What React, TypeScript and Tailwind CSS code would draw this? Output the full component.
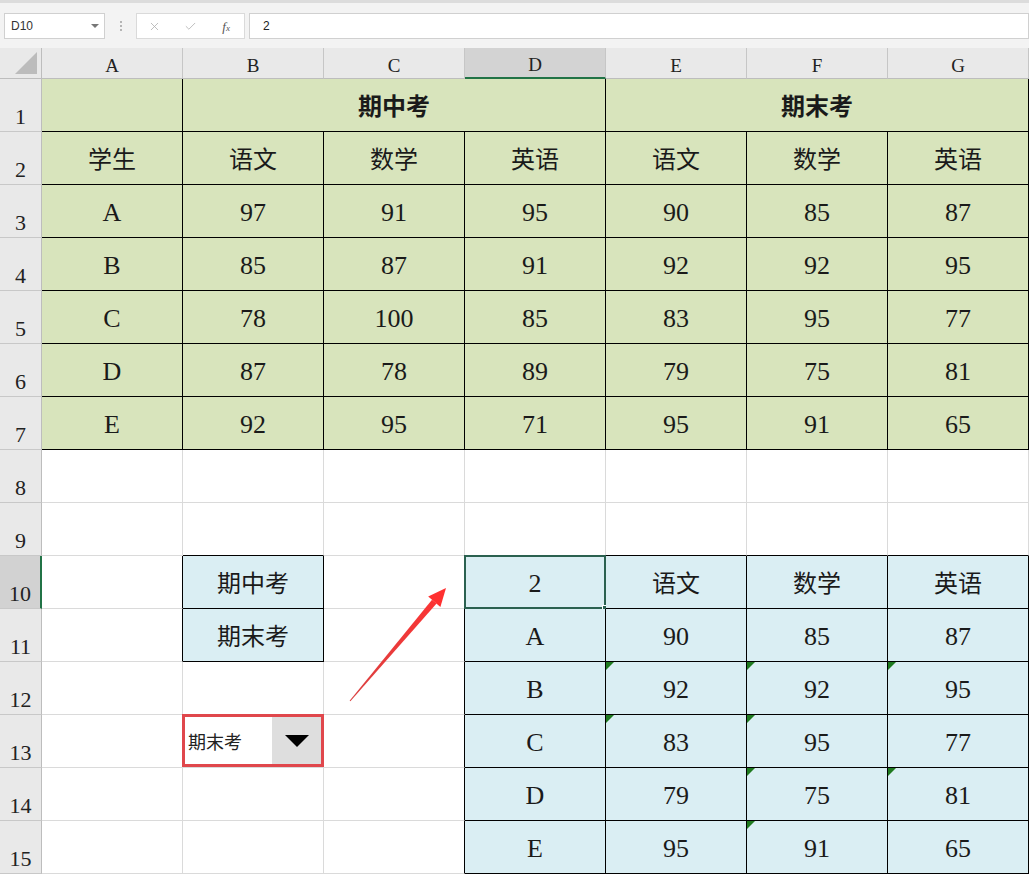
import React from 'react';
import { X, Check } from 'lucide-react';

type CellDef = { t?: string; bold?: boolean; mark?: boolean; dd?: boolean; sel?: boolean };

const SERIF = "font-['Liberation_Serif','Noto_Sans_CJK_SC',serif]";
const SANS = "font-['Noto_Sans_CJK_SC','Noto_Sans',sans-serif]";

const c = (t: string, extra: Partial<CellDef> = {}): CellDef => ({ t, ...extra });

const rows: CellDef[][] = [
  [],
  ['学生', '语文', '数学', '英语', '语文', '数学', '英语'].map((t) => c(t)),
  ['A', '97', '91', '95', '90', '85', '87'].map((t) => c(t)),
  ['B', '85', '87', '91', '92', '92', '95'].map((t) => c(t)),
  ['C', '78', '100', '85', '83', '95', '77'].map((t) => c(t)),
  ['D', '87', '78', '89', '79', '75', '81'].map((t) => c(t)),
  ['E', '92', '95', '71', '95', '91', '65'].map((t) => c(t)),
  Array.from({ length: 7 }, () => c('')),
  Array.from({ length: 7 }, () => c('')),
  [c(''), c('期中考'), c(''), c('2', { sel: true }), c('语文'), c('数学'), c('英语')],
  [c(''), c('期末考'), c(''), c('A'), c('90'), c('85'), c('87')],
  [c(''), c(''), c(''), c('B'), c('92', { mark: true }), c('92', { mark: true }), c('95', { mark: true })],
  [c(''), c('', { dd: true }), c(''), c('C'), c('83', { mark: true }), c('95', { mark: true }), c('77')],
  [c(''), c(''), c(''), c('D'), c('79'), c('75', { mark: true }), c('81', { mark: true })],
  [c(''), c(''), c(''), c('E'), c('95'), c('91', { mark: true }), c('65')],
];

function inTable(r: number, col: number) {
  if (r >= 1 && r <= 7) return true;
  if (r >= 10 && r <= 15 && col >= 3) return true;
  if ((r === 10 || r === 11) && col === 1) return true;
  return false;
}

function bgOf(r: number, col: number) {
  if (r >= 1 && r <= 7) return 'bg-[#d8e4bc]';
  if (inTable(r, col)) return 'bg-[#daeef3]';
  return 'bg-white';
}

function RowHeader({ n }: { n: number }) {
  const selected = n === 10;
  return (
    <div
      className={`h-[53px] flex items-end justify-center pb-[1px] border-b border-b-[#c8c8c8] ${SERIF} text-[22px] leading-none text-[#222] ${
        selected ? 'bg-[#d2d2d2] border-r-2 border-r-[#217346]' : 'bg-[#e9e9e9] border-r border-r-[#bdbdbd]'
      }`}
    >
      <span className="pb-[2px]">{n}</span>
    </div>
  );
}

function Cell({ r, col, d, span = 1 }: { r: number; col: number; d: CellDef; span?: number }) {
  const lastCol = col + span - 1;
  const rb = inTable(r, lastCol) || (lastCol < 6 && inTable(r, lastCol + 1)) ? 'border-r-black' : 'border-r-[#dadada]';
  const bb = inTable(r, col) || inTable(r + 1, col) ? 'border-b-black' : 'border-b-[#dadada]';
  const isCjk = d.t && /[\u4e00-\u9fff]/.test(d.t);
  return (
    <div
      className={`relative h-[53px] border-r border-b ${rb} ${bb} ${bgOf(r, col)} flex items-center justify-center pt-[3px] ${
        span === 3 ? 'col-span-3' : ''
      }`}
    >
      {d.t ? (
        <span
          className={`${SERIF} leading-none text-[#1a1a1a] ${isCjk ? 'text-[24px]' : 'text-[26px]'} ${
            d.bold ? 'font-bold' : 'font-normal'
          }`}
        >
          {d.t}
        </span>
      ) : null}
      {d.mark ? (
        <div className="absolute left-0 top-0 w-0 h-0 border-t-[8px] border-t-[#1f7a1f] border-r-[8px] border-r-transparent" />
      ) : null}
      {d.sel ? (
        <div className="absolute -left-px -top-px w-[142px] h-[54px] border-2 border-[#2b6150]">
          <div className="absolute -right-[4px] -bottom-[4px] w-[6px] h-[6px] bg-[#2b6150] border border-white" />
        </div>
      ) : null}
      {d.dd ? (
        <div className="absolute -left-px -top-px -right-px bottom-0 border-[3px] border-[#e0474c] bg-white flex">
          <div className={`flex-1 flex items-center pl-[3px] pt-[1px] ${SANS} text-[18px] text-[#222]`}>期末考</div>
          <div className="w-[49px] bg-[#dedede] flex items-center justify-center">
            <div className="w-0 h-0 border-l-[12px] border-l-transparent border-r-[12px] border-r-transparent border-t-[12px] border-t-black" />
          </div>
        </div>
      ) : null}
    </div>
  );
}

export default function App() {
  const cols = ['A', 'B', 'C', 'D', 'E', 'F', 'G'];
  return (
    <div className="relative w-[1029px] h-[875px] overflow-hidden bg-white">
      <div className="h-[48px] bg-[#f3f3f3] border-t-[3px] border-t-[#dcdcdc] flex items-start pt-[10px] pl-[4px] gap-0">
        <div className="w-[101px] h-[26px] bg-white border border-[#d0d0d0] flex items-center justify-between pl-[6px] pr-[5px]">
          <span className="font-['Liberation_Sans',sans-serif] text-[12px] text-[#333]">D10</span>
          <div className="w-0 h-0 border-l-[4px] border-l-transparent border-r-[4px] border-r-transparent border-t-[4px] border-t-[#777]" />
        </div>
        <div className="w-[31px] h-[26px] flex items-center justify-center">
          <div className="flex flex-col gap-[2px]">
            <div className="w-[2px] h-[2px] bg-[#b5b5b5]" />
            <div className="w-[2px] h-[2px] bg-[#b5b5b5]" />
            <div className="w-[2px] h-[2px] bg-[#b5b5b5]" />
          </div>
        </div>
        <div className="w-[109px] h-[26px] bg-white border border-[#dadada] flex items-center">
          <div className="w-[36px] flex justify-center">
            <X size={13} strokeWidth={1.5} color="#b0b0b0" />
          </div>
          <div className="w-[36px] flex justify-center">
            <Check size={13} strokeWidth={1.5} color="#b0b0b0" />
          </div>
          <div className="w-[36px] flex justify-center">
            <span className="font-['Liberation_Serif',serif] italic text-[13px] text-[#555] leading-none">
              f<span className="text-[9px]">x</span>
            </span>
          </div>
        </div>
        <div className="ml-[4px] flex-1 h-[26px] bg-white border border-[#d0d0d0] flex items-center pl-[13px]">
          <span className="font-['Liberation_Sans',sans-serif] text-[12px] text-[#222]">2</span>
        </div>
      </div>

      <div className="grid grid-cols-[42px_repeat(7,141px)]">
        <div className="relative h-[31px] bg-[#e9e9e9] border-b border-b-[#bdbdbd] border-r border-r-[#bdbdbd]">
          <div className="absolute right-[4px] bottom-[4px] w-0 h-0 border-l-[22px] border-l-transparent border-b-[22px] border-b-[#bcbcbc]" />
        </div>
        {cols.map((l) => (
          <div
            key={l}
            className={`h-[31px] flex items-center justify-center pt-[4px] ${SERIF} text-[19px] leading-none text-[#222] border-r border-r-[#c6c6c6] ${
              l === 'D' ? 'bg-[#d3d3d3] border-b-2 border-b-[#217346]' : 'bg-[#e9e9e9] border-b border-b-[#bdbdbd]'
            }`}
          >
            {l}
          </div>
        ))}

        <RowHeader n={1} />
        <Cell r={1} col={0} d={c('')} />
        <Cell r={1} col={1} d={c('期中考', { bold: true })} span={3} />
        <Cell r={1} col={4} d={c('期末考', { bold: true })} span={3} />

        {rows.slice(1).map((row, i) => {
          const r = i + 2;
          return (
            <React.Fragment key={r}>
              <RowHeader n={r} />
              {row.map((d, col) => (
                <Cell key={col} r={r} col={col} d={d} />
              ))}
            </React.Fragment>
          );
        })}
      </div>

      <svg className="absolute left-0 top-0 pointer-events-none" width="1029" height="875" viewBox="0 0 1029 875">
        <defs>
          <linearGradient id="ag" x1="350" y1="701" x2="446" y2="588" gradientUnits="userSpaceOnUse">
            <stop offset="0" stopColor="#d94040" />
            <stop offset="1" stopColor="#ff3333" />
          </linearGradient>
        </defs>
        <polygon points="350.4,701.3 349.6,700.7 432,599.8 436.6,603.6" fill="url(#ag)" />
        <polygon points="446,588 428.2,596.5 440.4,606.9" fill="#ff3030" />
      </svg>
    </div>
  );
}
